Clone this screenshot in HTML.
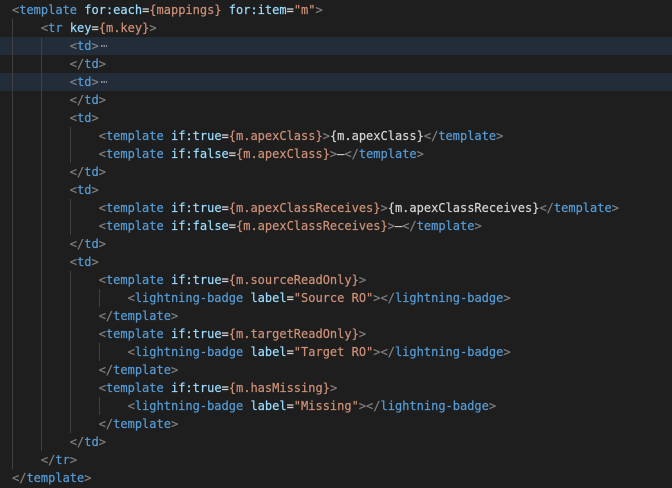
<!DOCTYPE html>
<html><head><meta charset="utf-8">
<style>
html,body{margin:0;padding:0;background:#1e1e1e;}
body{width:672px;height:488px;overflow:hidden;position:relative;font-family:"DejaVu Sans Mono","Liberation Mono",monospace;font-size:12px;line-height:18px;color:#d4d4d4;}
.l{position:absolute;left:12px;white-space:pre;height:18px;-webkit-text-stroke:0.2px currentColor;}
.hl{position:absolute;left:0;width:672px;height:18px;background:#232d3a;}
.g{position:absolute;width:1px;background:#404040;}
b{font-weight:normal;color:#808080}
i{font-style:normal;color:#569cd6}
u{text-decoration:none;color:#9cdcfe}
s{text-decoration:none;color:#ce9178}
.dots{position:absolute;left:100.5px;width:7px;height:2px;background:repeating-linear-gradient(90deg,#8a8f96 0 1.4px,transparent 1.4px 2.4px);}
</style></head><body>
<div class="hl" style="top:37px"></div>
<div class="hl" style="top:73px"></div>
<div class="g" style="left:12px;top:19px;height:450px"></div>
<div class="g" style="left:41px;top:37px;height:414px"></div>
<div class="g" style="left:70px;top:127px;height:36px"></div>
<div class="g" style="left:70px;top:199px;height:36px"></div>
<div class="g" style="left:70px;top:271px;height:162px"></div>
<div class="g" style="left:99px;top:289px;height:18px"></div>
<div class="g" style="left:99px;top:343px;height:18px"></div>
<div class="g" style="left:99px;top:397px;height:18px"></div>
<div class="dots" style="top:45px"></div>
<div class="dots" style="top:81px"></div>
<div class="l" style="top:1px"><b>&lt;</b><i>template</i> <u>for:each</u>=<s>{mappings}</s> <u>for:item</u>=<s>"m"</s><b>&gt;</b></div>
<div class="l" style="top:19px">    <b>&lt;</b><i>tr</i> <u>key</u>=<s>{m.key}</s><b>&gt;</b></div>
<div class="l" style="top:37px">        <b>&lt;</b><i>td</i><b>&gt;</b></div>
<div class="l" style="top:55px">        <b>&lt;/</b><i>td</i><b>&gt;</b></div>
<div class="l" style="top:73px">        <b>&lt;</b><i>td</i><b>&gt;</b></div>
<div class="l" style="top:91px">        <b>&lt;/</b><i>td</i><b>&gt;</b></div>
<div class="l" style="top:109px">        <b>&lt;</b><i>td</i><b>&gt;</b></div>
<div class="l" style="top:127px">            <b>&lt;</b><i>template</i> <u>if:true</u>=<s>{m.apexClass}</s><b>&gt;</b>{m.apexClass}<b>&lt;/</b><i>template</i><b>&gt;</b></div>
<div class="l" style="top:145px">            <b>&lt;</b><i>template</i> <u>if:false</u>=<s>{m.apexClass}</s><b>&gt;</b>–<b>&lt;/</b><i>template</i><b>&gt;</b></div>
<div class="l" style="top:163px">        <b>&lt;/</b><i>td</i><b>&gt;</b></div>
<div class="l" style="top:181px">        <b>&lt;</b><i>td</i><b>&gt;</b></div>
<div class="l" style="top:199px">            <b>&lt;</b><i>template</i> <u>if:true</u>=<s>{m.apexClassReceives}</s><b>&gt;</b>{m.apexClassReceives}<b>&lt;/</b><i>template</i><b>&gt;</b></div>
<div class="l" style="top:217px">            <b>&lt;</b><i>template</i> <u>if:false</u>=<s>{m.apexClassReceives}</s><b>&gt;</b>–<b>&lt;/</b><i>template</i><b>&gt;</b></div>
<div class="l" style="top:235px">        <b>&lt;/</b><i>td</i><b>&gt;</b></div>
<div class="l" style="top:253px">        <b>&lt;</b><i>td</i><b>&gt;</b></div>
<div class="l" style="top:271px">            <b>&lt;</b><i>template</i> <u>if:true</u>=<s>{m.sourceReadOnly}</s><b>&gt;</b></div>
<div class="l" style="top:289px">                <b>&lt;</b><i>lightning-badge</i> <u>label</u>=<s>"Source RO"</s><b>&gt;&lt;/</b><i>lightning-badge</i><b>&gt;</b></div>
<div class="l" style="top:307px">            <b>&lt;/</b><i>template</i><b>&gt;</b></div>
<div class="l" style="top:325px">            <b>&lt;</b><i>template</i> <u>if:true</u>=<s>{m.targetReadOnly}</s><b>&gt;</b></div>
<div class="l" style="top:343px">                <b>&lt;</b><i>lightning-badge</i> <u>label</u>=<s>"Target RO"</s><b>&gt;&lt;/</b><i>lightning-badge</i><b>&gt;</b></div>
<div class="l" style="top:361px">            <b>&lt;/</b><i>template</i><b>&gt;</b></div>
<div class="l" style="top:379px">            <b>&lt;</b><i>template</i> <u>if:true</u>=<s>{m.hasMissing}</s><b>&gt;</b></div>
<div class="l" style="top:397px">                <b>&lt;</b><i>lightning-badge</i> <u>label</u>=<s>"Missing"</s><b>&gt;&lt;/</b><i>lightning-badge</i><b>&gt;</b></div>
<div class="l" style="top:415px">            <b>&lt;/</b><i>template</i><b>&gt;</b></div>
<div class="l" style="top:433px">        <b>&lt;/</b><i>td</i><b>&gt;</b></div>
<div class="l" style="top:451px">    <b>&lt;/</b><i>tr</i><b>&gt;</b></div>
<div class="l" style="top:469px"><b>&lt;/</b><i>template</i><b>&gt;</b></div>
</body></html>
